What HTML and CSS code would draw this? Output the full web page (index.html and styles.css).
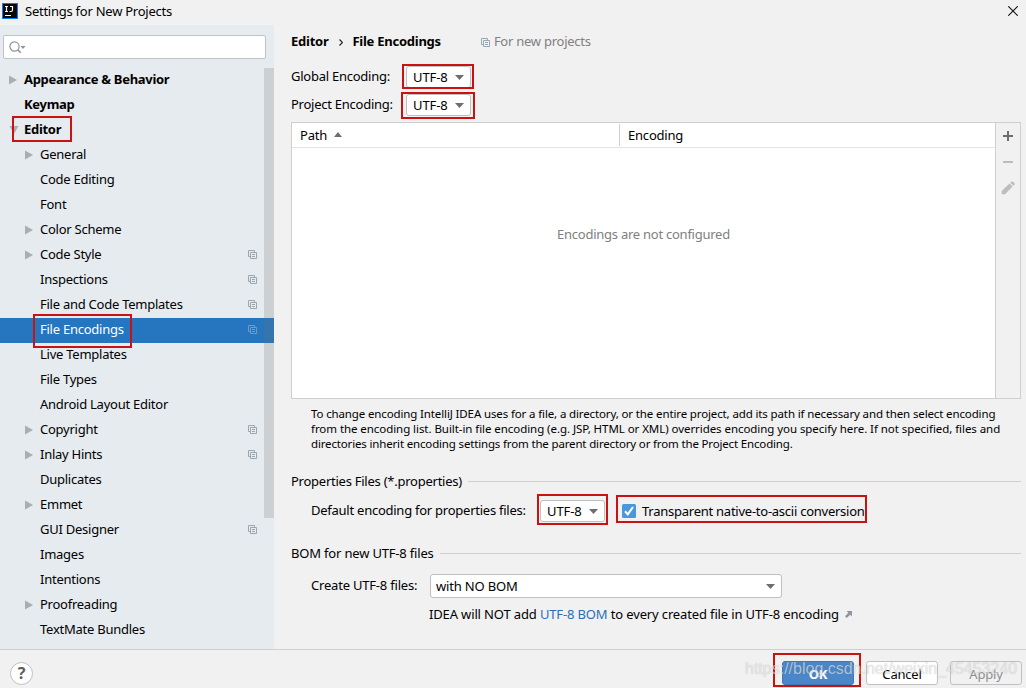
FILE: index.html
```html
<!DOCTYPE html>
<html lang="en">
<head>
    <meta charset="UTF-8">
    <meta name="viewport" content="width=device-width, initial-scale=1.0">
    <title>Settings for New Projects</title>
    <link rel="stylesheet" href="styles.css">
</head>
<body>
    <!-- Shared icons -->
    <svg class="sprite" aria-hidden="true">
        <symbol id="copy" viewBox="0 0 9 9"><path d="M2 6.5H.5v-6h6V2M2.5 2.5h6v6h-6zM4 4.5h3M4 6.5h3" fill="none" stroke="currentColor"/></symbol>
        <symbol id="right" viewBox="0 0 8 10"><path d="M0 .5L8 5 0 9.5z" fill="currentColor"/></symbol>
        <symbol id="down" viewBox="0 0 9 5"><path d="M0 0h9L4.5 5z" fill="currentColor"/></symbol>
    </svg>

    <header class="titlebar">
        <svg class="logo" viewBox="0 0 16 16"><path d="M0 0h16v16H0z" fill="#087cfa"/><path d="M1 1h14v14H1z" fill="#080808"/><path d="M3 3.500h3M4.500 3.500v5M3 8.500h3M8 3.500h2.500v3.500q0 1.500-1.500 1.500H7.500M3 12.500h6" fill="none" stroke="#fff" stroke-width="1.2"/></svg>
        <span class="title">Settings for New Projects</span>
        <svg class="close" viewBox="0 0 10 10"><path d="M.3.3l9.400 9.400M9.700.3L.3 9.700" stroke="#111" stroke-width="1.1"/></svg>
    </header>

    <div class="content">
        <aside class="sidebar">
            <div class="search">
                <svg viewBox="0 0 17 13"><circle cx="5.500" cy="5.500" r="4.600" fill="none" stroke="#8a959e" stroke-width="1.200"/><path d="M8.700 8.700l3 3" stroke="#8a959e" stroke-width="1.600"/><path d="M11.500 5h5L14 8z" fill="#8a959e"/></svg>
            </div>
            <div class="tree-wrap">
                <ul class="tree">
                    <li class="top"><svg class="arrow"><use href="#right"/></svg><span>Appearance &amp; Behavior</span></li>
                    <li class="top"><i class="arrow"></i><span>Keymap</span></li>
                    <li class="top"><svg class="arrow open" viewBox="0 0 10 8"><path d="M.5 0h9L5 8z" fill="currentColor"/></svg><span>Editor</span></li>
                    <li><svg class="arrow"><use href="#right"/></svg><span>General</span></li>
                    <li><i class="arrow"></i><span>Code Editing</span></li>
                    <li><i class="arrow"></i><span>Font</span></li>
                    <li><svg class="arrow"><use href="#right"/></svg><span>Color Scheme</span></li>
                    <li><svg class="arrow"><use href="#right"/></svg><span>Code Style</span><svg class="copy"><use href="#copy"/></svg></li>
                    <li><i class="arrow"></i><span>Inspections</span><svg class="copy"><use href="#copy"/></svg></li>
                    <li><i class="arrow"></i><span>File and Code Templates</span><svg class="copy"><use href="#copy"/></svg></li>
                    <li class="selected"><i class="arrow"></i><span>File Encodings</span><svg class="copy"><use href="#copy"/></svg></li>
                    <li><i class="arrow"></i><span>Live Templates</span></li>
                    <li><i class="arrow"></i><span>File Types</span></li>
                    <li><i class="arrow"></i><span>Android Layout Editor</span></li>
                    <li><svg class="arrow"><use href="#right"/></svg><span>Copyright</span><svg class="copy"><use href="#copy"/></svg></li>
                    <li><svg class="arrow"><use href="#right"/></svg><span>Inlay Hints</span><svg class="copy"><use href="#copy"/></svg></li>
                    <li><i class="arrow"></i><span>Duplicates</span></li>
                    <li><svg class="arrow"><use href="#right"/></svg><span>Emmet</span></li>
                    <li><i class="arrow"></i><span>GUI Designer</span><svg class="copy"><use href="#copy"/></svg></li>
                    <li><i class="arrow"></i><span>Images</span></li>
                    <li><i class="arrow"></i><span>Intentions</span></li>
                    <li><svg class="arrow"><use href="#right"/></svg><span>Proofreading</span></li>
                    <li><i class="arrow"></i><span>TextMate Bundles</span></li>
                </ul>
                <div class="scrollbar"></div>
            </div>
        </aside>

        <main class="panel">
            <div class="breadcrumb">
                <b>Editor</b>
                <svg class="chevron" viewBox="0 0 4 7"><path d="M.5.5l3 3-3 3" fill="none" stroke="#222" stroke-width="1.200"/></svg>
                <b>File Encodings</b>
                <span class="scope"><svg class="copy"><use href="#copy"/></svg><span>For new projects</span></span>
            </div>

            <div class="field global">
                <label>Global Encoding:</label>
                <div class="combo">UTF-8<svg><use href="#down"/></svg></div>
            </div>
            <div class="field project">
                <label>Project Encoding:</label>
                <div class="combo">UTF-8<svg><use href="#down"/></svg></div>
            </div>

            <div class="table">
                <div class="table-body">
                    <div class="table-head">
                        <div class="col path">Path<svg viewBox="0 0 8 5"><path d="M0 5h8L4 0z" fill="#6e6e6e"/></svg></div>
                        <div class="col">Encoding</div>
                    </div>
                    <p class="empty">Encodings are not configured</p>
                </div>
                <div class="tools">
                    <svg viewBox="0 0 14 14"><path d="M7 2v10M2 7h10" stroke="#6e6e6e" stroke-width="2"/></svg>
                    <svg viewBox="0 0 14 14"><path d="M2 7h10" stroke="#bdbdbd" stroke-width="2"/></svg>
                    <svg viewBox="0 0 14 14"><path d="M.7 13.300v-3.300L8.500 2.500l3.100 3.100L4 13.300zM9.300 1.700l1-.9q.9-.8 1.800 0l1.200 1.200q.9.900 0 1.800l-.9.900z" fill="#bdbdbd"/></svg>
                </div>
            </div>

            <div class="note">
                <span class="n1">To change encoding IntelliJ IDEA uses for a file, a directory, or the entire project, add its path if necessary and then select encoding</span><br>
                <span class="n2">from the encoding list. Built-in file encoding (e.g. JSP, HTML or XML) overrides encoding you specify here. If not specified, files and</span><br>
                <span>directories inherit encoding settings from the parent directory or from the Project Encoding.</span>
            </div>

            <h2 class="section props">Properties Files (*.properties)</h2>
            <div class="field default">
                <label>Default encoding for properties files:</label>
                <div class="combo">UTF-8<svg><use href="#down"/></svg></div>
                <svg class="check" viewBox="0 0 14 14"><rect width="14" height="14" rx="1.500" fill="#4b97de"/><path d="M3 7.300l2.800 3L11 3" fill="none" stroke="#fff" stroke-width="2"/></svg>
                <span>Transparent native-to-ascii conversion</span>
            </div>

            <h2 class="section bom">BOM for new UTF-8 files</h2>
            <div class="field create">
                <label>Create UTF-8 files:</label>
                <div class="combo wide">with NO BOM<svg><use href="#down"/></svg></div>
            </div>
            <p class="hint">IDEA will NOT add <a>UTF-8 BOM</a> to every created file in UTF-8 encoding<svg viewBox="0 0 7 7"><path d="M1.500 0H7v5.500L5.200 3.700 1.700 7 0 5.300l3.400-3.500z" fill="#8c979f"/></svg></p>
        </main>
    </div>

    <footer class="footer">
        <button class="help">?</button>
        <button class="btn primary">OK</button>
        <button class="btn">Cancel</button>
        <button class="btn disabled">Apply</button>
    </footer>

    <!-- Highlight frames and watermark lie over the window -->
    <div class="mark m-editor"></div>
    <div class="mark m-file"></div>
    <div class="mark m-global"></div>
    <div class="mark m-project"></div>
    <div class="mark m-default"></div>
    <div class="mark m-ascii"></div>
    <div class="mark m-ok"></div>
    <div class="watermark">https://blog.csdn.net/weixin_45453240</div>
</body>
</html>
```
FILE: styles.css
```css
* {
    box-sizing: border-box;
}
body {
    position: relative;
    display: flex;
    flex-direction: column;
    width: 1026px;
    height: 688px;
    margin: 0;
    overflow: hidden;
    background: #f1f1f1;
    color: #000;
    font: 13px/20px "Noto Sans", sans-serif;
    letter-spacing: -.25px;
    white-space: nowrap;
}
svg {
    display: block;
    flex: none;
}
.sprite {
    position: absolute;
    width: 0;
    height: 0;
}
.titlebar {
    display: flex;
    align-items: center;
    height: 25px;
    padding: 0 8px 2px 2px;
}
.title {
    padding-bottom: 2px;
}
.logo {
    width: 16px;
    height: 16px;
    margin: -1px 7px 0 0;
}
.close {
    width: 10px;
    height: 10px;
    margin: -1px 0 0 auto;
}
.content {
    display: flex;
    height: 624px;
}

/* Sidebar */
.sidebar {
    width: 274px;
    padding-top: 10px;
    background: #e6ebef;
}
.search {
    display: flex;
    width: 263px;
    height: 24px;
    margin: 0 0 9px 3px;
    padding: 5px;
    border: 1px solid #c0c3c5;
    border-radius: 2px;
    background: #fff;
}
.search svg {
    width: 17px;
    height: 13px;
}
.tree-wrap {
    position: relative;
}
.tree {
    margin: 0;
    padding: 0;
    list-style: none;
}
.tree li {
    display: flex;
    align-items: center;
    height: 25px;
    padding: 0 17px 2px 25px;
}
.tree span {
    padding-bottom: 2px;
}
.tree .top {
    padding-left: 9px;
    font-weight: bold;
    letter-spacing: -.3px;
}
.tree .arrow {
    width: 8px;
    height: 10px;
    margin-right: 7px;
    color: #adadad;
}
.tree .open {
    width: 10px;
    height: 8px;
    margin-right: 5px;
}
.copy {
    width: 9px;
    height: 9px;
    color: #9aa7b0;
}
.tree .copy {
    margin-left: auto;
}
.tree .selected {
    background: #2675bf;
    color: #fff;
}
.selected .copy {
    color: #8197aa;
}
.scrollbar {
    position: absolute;
    top: 0;
    right: 0;
    width: 10px;
    height: 450px;
    background: rgba(115, 115, 115, .22);
}

/* Settings panel */
.panel {
    display: flex;
    flex-direction: column;
    width: 752px;
    padding: 7px 5px 0 17px;
}
.breadcrumb {
    display: flex;
    align-items: center;
    height: 20px;
}
.breadcrumb b,
.scope span {
    padding-bottom: 2px;
}
.chevron {
    width: 4px;
    height: 7px;
    margin: 0 9px 0 11px;
}
.scope {
    display: flex;
    align-items: center;
    gap: 4px;
    margin-left: 40px;
    color: #808080;
}
.field {
    display: flex;
    align-items: center;
    height: 22px;
}
.field label {
    flex: none;
    width: 115px;
    padding-bottom: 2px;
}
.combo {
    display: flex;
    align-items: center;
    justify-content: space-between;
    width: 65px;
    height: 22px;
    padding: 0 6px;
    border: 1px solid #c0c0c0;
    border-radius: 3px;
    background: #fff;
    letter-spacing: -.1px;
}
.combo svg {
    width: 9px;
    height: 5px;
    color: #6e6e6e;
}
.global {
    margin-top: 14px;
}
.project {
    margin-top: 6px;
}
.table {
    display: flex;
    flex: none;
    width: 730px;
    height: 277px;
    margin-top: 6px;
    border: 1px solid #cfcfcf;
}
.table-body {
    width: 704px;
    border-right: 1px solid #cfcfcf;
    background: #fff;
}
.table-head {
    display: flex;
    height: 25px;
    padding: 1px 0;
    border-bottom: 1px solid #e3e3e3;
    letter-spacing: -.2px;
}
.col {
    display: flex;
    align-items: center;
    padding-left: 8px;
}
.path {
    width: 328px;
    border-right: 1px solid #cfcfcf;
}
.path svg {
    width: 8px;
    height: 5px;
    margin: -2px 0 0 7px;
}
.empty {
    margin: 76px 0 0;
    color: #808080;
    text-align: center;
}
.tools {
    display: flex;
    flex-direction: column;
    align-items: center;
    gap: 12px;
    width: 24px;
    padding-top: 6px;
}
.tools svg {
    width: 14px;
    height: 14px;
}
.note {
    margin: 7px 0 0 20px;
    font-size: 11.5px;
    line-height: 15px;
    letter-spacing: -.16px;
}
.n1 {
    letter-spacing: -.13px;
}
.n2 {
    letter-spacing: -.06px;
}
.section {
    display: flex;
    align-items: center;
    height: 20px;
    margin: 0;
    font-size: 13px;
    font-weight: normal;
}
.section::after {
    content: "";
    flex: 1;
    height: 1px;
    margin-left: 6px;
    background: #cfcfcf;
}
.props {
    margin-top: 20px;
}
.default {
    margin: 9px 0 0 20px;
}
.default label {
    width: 229px;
}
.check {
    width: 14px;
    height: 14px;
    margin: 0 6px 0 17px;
}
.bom {
    margin-top: 21px;
    letter-spacing: -.18px;
}
.create {
    height: 24px;
    margin: 11px 0 0 20px;
    letter-spacing: -.2px;
}
.create label {
    width: 119px;
}
.wide {
    width: 352px;
    height: 24px;
    padding-left: 5px;
    letter-spacing: -.17px;
}
.hint {
    display: flex;
    align-items: center;
    margin: 6px 0 0 138px;
    letter-spacing: -.14px;
    white-space: pre;
}
.hint a {
    color: #2a6fb5;
}
.hint svg {
    width: 7px;
    height: 7px;
    margin-left: 6px;
}

/* Footer */
.footer {
    display: flex;
    align-items: flex-start;
    gap: 12px;
    height: 39px;
    padding: 11px 4px 0 10px;
    border-top: 1px solid #cfcfcf;
}
.help {
    width: 23px;
    height: 23px;
    margin: 1px auto 0 0;
    padding: 0;
    border: 1px solid #c0c0c0;
    border-radius: 50%;
    background: #fff;
    color: #5c5c5c;
    font: bold 16px/21px "Noto Sans", sans-serif;
}
.btn {
    width: 72px;
    height: 24px;
    padding: 2px 0 0;
    border: 1px solid #c0c0c0;
    border-radius: 3px;
    background: #fff;
    font: 13px/20px "Noto Sans", sans-serif;
    letter-spacing: -.2px;
}
.primary {
    border-color: #3b79ba;
    background: #4b87c8;
    color: #fff;
    font-weight: bold;
}
.disabled {
    background: transparent;
    color: #8c8c8c;
}

/* Overlays */
.mark {
    position: absolute;
    border: 2px solid #c91212;
}
.m-editor { left: 12px; top: 116px; width: 60px; height: 26px; }
.m-file { left: 33px; top: 314px; width: 99px; height: 34px; }
.m-global { left: 402px; top: 64px; width: 72px; height: 25px; }
.m-project { left: 401px; top: 92px; width: 74px; height: 27px; }
.m-default { left: 537px; top: 494px; width: 71px; height: 31px; }
.m-ascii { left: 616px; top: 495px; width: 251px; height: 28px; }
.m-ok { left: 773px; top: 653px; width: 88px; height: 34px; }
.watermark {
    position: absolute;
    left: 745px;
    top: 659px;
    color: rgba(255, 255, 255, .6);
    font: 16px/20px "Liberation Sans", sans-serif;
    letter-spacing: 0;
    text-shadow: 0 0 1px rgba(0, 0, 0, .25);
}
```
